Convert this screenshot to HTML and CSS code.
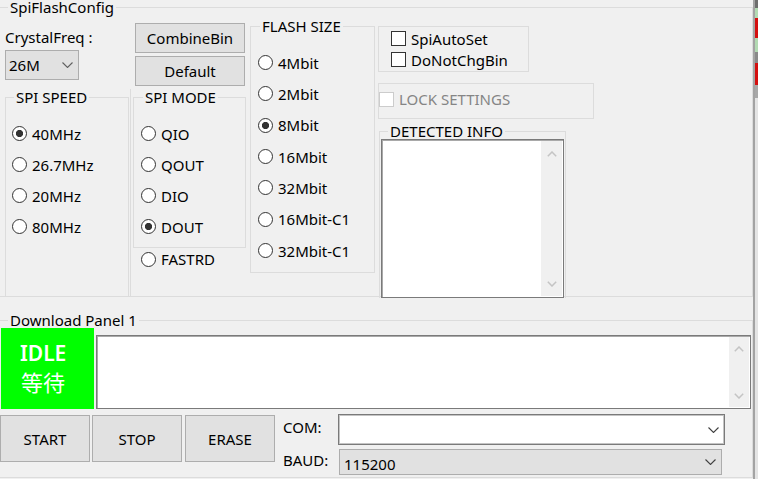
FILE: index.html
```html
<!DOCTYPE html>
<html>
<head>
<meta charset="utf-8">
<link rel="stylesheet" href="styles.css">
</head>
<body>
<div class="window">
  <div class="main">
    <div class="grp cfg">
      <div class="cap cap-cfg">SpiFlashConfig</div>
      <div class="cfg-body">
        <div class="col-a">
          <div class="lbl crystal">CrystalFreq :</div>
          <div class="select sel-crystal"><span>26M</span><svg class="chev" width="11" height="6" viewBox="0 0 11 6"><polyline points="0.5,0.5 5.5,5.5 10.5,0.5" fill="none" stroke="#606060" stroke-width="1.1"/></svg></div>
          <div class="grp speed">
            <div class="cap cap-speed">SPI SPEED</div>
            <div class="radios radios-speed">
              <div class="radio"><span class="rb on"></span>40MHz</div>
              <div class="radio"><span class="rb"></span>26.7MHz</div>
              <div class="radio"><span class="rb"></span>20MHz</div>
              <div class="radio"><span class="rb"></span>80MHz</div>
            </div>
          </div>
        </div>
        <div class="col-b">
          <div class="btn btn-combine">CombineBin</div>
          <div class="btn btn-default">Default</div>
          <div class="panel">
            <div class="grp mode">
              <div class="cap cap-mode">SPI MODE</div>
              <div class="radios radios-mode">
                <div class="radio"><span class="rb"></span>QIO</div>
                <div class="radio"><span class="rb"></span>QOUT</div>
                <div class="radio"><span class="rb"></span>DIO</div>
                <div class="radio"><span class="rb on"></span>DOUT</div>
              </div>
            </div>
            <div class="radio fastrd"><span class="rb"></span>FASTRD</div>
          </div>
        </div>
        <div class="grp flash">
          <div class="cap cap-flash">FLASH SIZE</div>
          <div class="radios radios-flash">
            <div class="radio r-flash"><span class="rb"></span>4Mbit</div>
            <div class="radio r-flash"><span class="rb"></span>2Mbit</div>
            <div class="radio r-flash"><span class="rb on"></span>8Mbit</div>
            <div class="radio r-flash"><span class="rb"></span>16Mbit</div>
            <div class="radio r-flash"><span class="rb"></span>32Mbit</div>
            <div class="radio r-flash"><span class="rb"></span>16Mbit-C1</div>
            <div class="radio r-flash"><span class="rb"></span>32Mbit-C1</div>
          </div>
        </div>
        <div class="col-d">
          <div class="grp chks">
            <div class="chk"><span class="cb"></span>SpiAutoSet</div>
            <div class="chk"><span class="cb"></span>DoNotChgBin</div>
          </div>
          <div class="grp lock">
            <div class="chk chk-off"><span class="cb cb-off"></span>LOCK SETTINGS</div>
          </div>
          <div class="grp detect">
            <div class="cap cap-detect">DETECTED INFO</div>
            <div class="textbox info">
              <div class="vscroll vs-info">
                <svg width="10" height="6" viewBox="0 0 10 6"><polyline points="0.8,5.2 5,1 9.2,5.2" fill="none" stroke="#c4c4c4" stroke-width="1.5"/></svg>
                <svg width="10" height="6" viewBox="0 0 10 6"><polyline points="0.8,0.8 5,5 9.2,0.8" fill="none" stroke="#c4c4c4" stroke-width="1.5"/></svg>
              </div>
            </div>
          </div>
        </div>
      </div>
    </div>
    <div class="grp dl">
      <div class="cap cap-dl">Download Panel 1</div>
      <div class="dl-row1">
        <div class="status">
          <div class="st-en">IDLE</div>
          <div class="st-cn">等待</div>
        </div>
        <div class="textbox log">
          <div class="vscroll vs-log">
            <svg width="10" height="6" viewBox="0 0 10 6"><polyline points="0.8,5.2 5,1 9.2,5.2" fill="none" stroke="#c4c4c4" stroke-width="1.5"/></svg>
            <svg width="10" height="6" viewBox="0 0 10 6"><polyline points="0.8,0.8 5,5 9.2,0.8" fill="none" stroke="#c4c4c4" stroke-width="1.5"/></svg>
          </div>
        </div>
      </div>
      <div class="dl-row2">
        <div class="bbtn b-start">START</div>
        <div class="bbtn b-stop">STOP</div>
        <div class="bbtn b-erase">ERASE</div>
        <div class="com-col">
          <div class="com-row">
            <div class="clbl l-com">COM:</div>
            <div class="select sel-com"><svg class="chev" width="11" height="6" viewBox="0 0 11 6"><polyline points="0.5,0.5 5.5,5.5 10.5,0.5" fill="none" stroke="#404040" stroke-width="1.1"/></svg></div>
          </div>
          <div class="baud-row">
            <div class="clbl l-baud">BAUD:</div>
            <div class="select sel-baud"><span>115200</span><svg class="chev" width="11" height="6" viewBox="0 0 11 6"><polyline points="0.5,0.5 5.5,5.5 10.5,0.5" fill="none" stroke="#404040" stroke-width="1.1"/></svg></div>
          </div>
        </div>
      </div>
    </div>
  </div>
  <div class="edge"></div>
  <div class="strip">
    <div class="s s1"></div>
    <div class="s s2"></div>
    <div class="s s3"></div>
    <div class="s s2 s4"></div>
    <div class="s s5"></div>
    <div class="s s3 s6"></div>
    <div class="s s7"></div>
    <div class="s s8"></div>
  </div>
</div>
</body>
</html>
```

FILE: styles.css
```css
* { box-sizing: border-box; }
html, body { margin: 0; padding: 0; }
body {
  width: 758px;
  height: 479px;
  overflow: hidden;
  background: #f0f0f0;
  font-family: "Noto Sans", "Noto Sans CJK SC", sans-serif;
  font-size: 15px;
  line-height: 16px;
  color: #000;
}
.window { display: flex; height: 479px; }
.main { width: 753px; flex: none; }
.edge { width: 2px; flex: none; background: #a3a3a3; }
.strip { width: 3px; flex: none; display: flex; flex-direction: column; }
.s1 { height: 8px; background: #6e6e6e; }
.s2 { height: 10px; background: #b3dab3; }
.s3 { height: 20px; background: #d41010; }
.s4 { height: 14px; }
.s5 { height: 11px; background: #8a8a8a; }
.s6 { height: 22px; }
.s7 { height: 13px; background: #a8a8a8; }
.s8 { flex: 1; background: #e4e4e4; }

/* group boxes */
.grp { border: 1px solid #dcdcdc; }
.cap {
  width: max-content;
  margin-top: -9px;
  padding: 0 2px;
  height: 16px;
  line-height: 16px;
  background: #f0f0f0;
  white-space: nowrap;
}

.cfg {
  margin-top: 7px;
  height: 290px;
  border-left: none;
}
.cap-cfg {
  margin-left: 8px;
  margin-top: -8px;
  height: 15px;
  line-height: 15px;
}
.cfg-body { display: flex; align-items: flex-start; }

/* column A */
.col-a { margin-left: 5px; width: 124px; flex: none; }
.crystal { margin-top: 14px; }
.select {
  display: flex;
  align-items: center;
  border: 1px solid #adadad;
  background: #e1e1e1;
}
.chev { margin-left: auto; flex: none; }
.sel-crystal {
  margin-top: 5px;
  width: 74px;
  height: 30px;
  padding-left: 3px;
}
.sel-crystal .chev { margin-right: 5px; }
.speed {
  margin-top: 17px;
  height: 199px;
  border-bottom: none;
}
.cap-speed { margin-left: 8px; }
.radios { padding-top: 13px; }
.radios-speed { padding-left: 6px; }
.radio { display: flex; align-items: center; height: 31px; white-space: nowrap; }
.rb {
  width: 15px;
  height: 15px;
  flex: none;
  border: 1px solid #333;
  border-radius: 50%;
  background: #fff;
  margin-right: 5px;
}
.rb.on { background: radial-gradient(circle, #333 0 3.3px, #fff 3.9px); }

/* column B */
.col-b { margin-left: 1px; width: 116px; flex: none; }
.btn {
  width: 110px;
  height: 30px;
  margin-left: 5px;
  background: #e1e1e1;
  border: 1px solid #adadad;
  display: flex;
  align-items: center;
  justify-content: center;
}
.btn-combine { margin-top: 8px; }
.btn-default { margin-top: 3px; }
.panel {
  margin-top: 3px;
  height: 207px;
  border-left: 1px solid #dcdcdc;
  padding: 8px 0 0 2px;
}
.mode { width: 113px; height: 151px; }
.cap-mode { margin-left: 9px; }
.radios-mode { padding-left: 7px; }
.fastrd { margin-top: 3px; height: 16px; padding-left: 8px; }

/* flash size */
.flash {
  margin-left: 4px;
  margin-top: 11px;
  width: 125px;
  height: 247px;
  flex: none;
}
.cap-flash { margin-left: 9px; }
.radios-flash { padding-left: 7px; }
.r-flash { height: 31.33px; }

/* column D */
.col-d { margin-left: 3px; width: 216px; flex: none; }
.chks {
  margin-top: 11px;
  width: 151px;
  height: 46px;
  padding: 1px 0 0 12px;
}
.chk { display: flex; align-items: center; height: 21px; white-space: nowrap; }
.cb {
  width: 15px;
  height: 15px;
  flex: none;
  border: 1px solid #333;
  background: #fff;
  margin-right: 5px;
}
.lock {
  margin-top: 11px;
  width: 216px;
  height: 36px;
  padding-top: 7px;
}
.chk-off { height: 16px; color: #858585; }
.cb-off { border-color: #cccccc; }
.detect {
  margin-top: 12px;
  margin-left: 1px;
  width: 187px;
  border-bottom: none;
}
.cap-detect { margin-left: 8px; }

.textbox {
  background: #fff;
  border: 1px solid #7a7a7a;
  box-shadow: inset 1px 1px 0 #a9a9a9;
  display: flex;
  justify-content: flex-end;
}
.info { margin-left: 1px; width: 183px; height: 159px; }
.vscroll {
  background: #f0f0f0;
  display: flex;
  flex-direction: column;
  align-items: center;
  justify-content: space-between;
}
.vs-info {
  width: 21px;
  margin: 1px 1px 1px 0;
  padding: 10px 0 9px 0;
}

/* download panel */
.dl {
  margin-top: 23px;
  height: 158px;
  border-left: none;
}
.cap-dl { margin-left: 8px; }
.dl-row1 { display: flex; align-items: flex-start; }
.status {
  margin-left: 1px;
  width: 93px;
  height: 81px;
  flex: none;
  background: #00ff00;
  color: #fff;
  padding: 12px 0 0 19px;
}
.st-en { font-size: 21px; line-height: 26px; font-weight: 600; }
.st-cn { font-family: "Noto Sans CJK SC", sans-serif; font-size: 22px; line-height: 26px; margin-top: 2px; padding-left: 1px; }
.log {
  margin-left: 2px;
  margin-top: 7px;
  width: 655px;
  height: 74px;
  flex: none;
}
.vs-log {
  width: 20px;
  margin: 1px 1px 1px 0;
  padding: 9px 0 8px 0;
}

.dl-row2 { display: flex; align-items: flex-start; margin-top: 6px; }
.bbtn {
  width: 90px;
  height: 47px;
  flex: none;
  background: #e1e1e1;
  border: 1px solid #adadad;
  display: flex;
  align-items: center;
  justify-content: center;
}
.b-stop { margin-left: 2px; }
.b-erase { margin-left: 3px; }
.com-col { margin-left: 8px; margin-top: -1px; }
.com-row, .baud-row { display: flex; align-items: flex-start; }
.clbl { flex: none; }
.l-com { width: 55px; padding-top: 5px; }
.l-baud { width: 56px; padding-top: 3px; }
.sel-com {
  width: 387px;
  height: 31px;
  background: #fff;
  border-color: #7a7a7a;
  box-shadow: inset 0 0 0 1px #c4c4c4;
}
.sel-com .chev { margin-right: 5px; }
.baud-row { margin-top: 4px; }
.sel-baud {
  width: 383px;
  height: 26px;
  padding: 3px 0 0 4px;
}
.sel-baud .chev { margin-right: 5px; margin-top: -3px; }
```
